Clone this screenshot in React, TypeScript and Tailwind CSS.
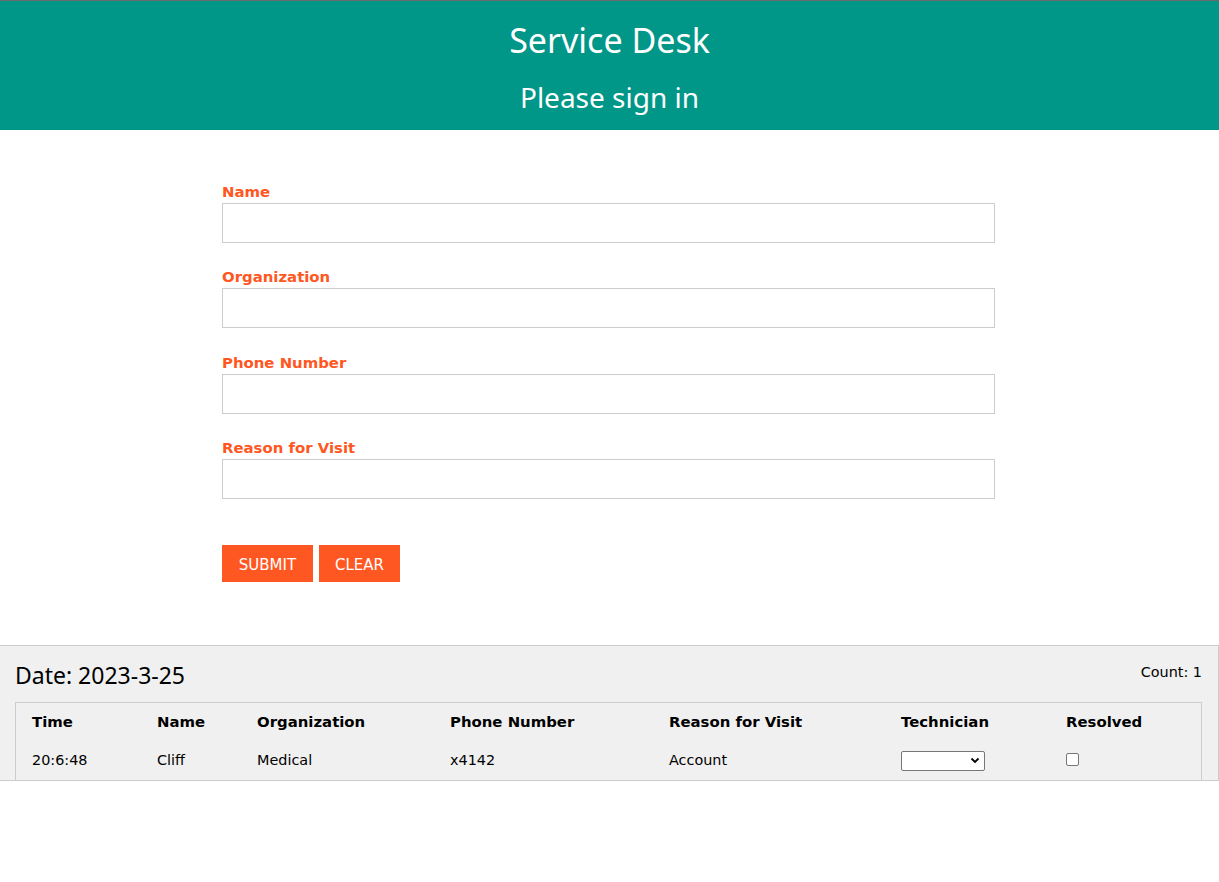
import React from "react";

const verdana = { fontFamily: '"DejaVu Sans", Verdana, sans-serif' };
const segoe = { fontFamily: '"Noto Sans", "Open Sans", sans-serif' };

function Field({ label, mt }: { label: string; mt: string }) {
  return (
    <div className={mt}>
      <div className="pt-[1px] text-[14.9px] leading-[17px] font-bold text-[#ff5722]" style={verdana}>
        {label}
      </div>
      <div className="mt-[2px] h-[40px] w-[773px] border border-[#cccccc] bg-white" />
    </div>
  );
}

const cols = "grid grid-cols-[125px_100px_193px_219px_232px_165px_1fr]";

export default function App() {
  return (
    <div className="min-h-[882px] w-full bg-white">
      <header className="flex h-[130px] flex-col items-center border-t border-[#6b6b6b] bg-[#009688] text-white" style={segoe}>
        <div className="mt-[15px] text-[34px] leading-[48px]">Service Desk</div>
        <div className="mt-[14px] text-[28px] leading-[38px]">Please sign in</div>
      </header>

      <div className="ml-[222px] pt-[53px]">
        <Field label="Name" mt="" />
        <Field label="Organization" mt="mt-[25px]" />
        <Field label="Phone Number" mt="mt-[26px]" />
        <Field label="Reason for Visit" mt="mt-[25px]" />
        <div className="mt-[46px] flex gap-[6px]" style={verdana}>
          <div className="flex h-[37px] w-[91px] items-center justify-center bg-[#ff5722] pt-[3px] text-[15px] text-white" style={verdana}>SUBMIT</div>
          <div className="flex h-[37px] w-[81px] items-center justify-center bg-[#ff5722] pt-[3px] text-[15px] text-white" style={verdana}>CLEAR</div>
        </div>
      </div>

      <section className="mt-[63px] border-t border-r border-b border-[#cccccc] bg-[#f0f0f0] pl-[15px] pr-[16px]">
        <div className="flex h-[56px] items-start justify-between">
          <div className="mt-[14px] text-[23px] leading-[30px] text-black" style={segoe}>Date: 2023-3-25</div>
          <div className="mt-[18px] text-[14.4px] leading-[17px] text-black" style={verdana}>Count: 1</div>
        </div>
        <div className="border-l border-r border-t border-[#cccccc] pl-[16px] text-[14.4px] text-black" style={verdana}>
          <div className={`${cols} h-[38px] items-center pt-[1px] text-[14.9px] font-bold`}>
            <div>Time</div>
            <div>Name</div>
            <div>Organization</div>
            <div>Phone Number</div>
            <div>Reason for Visit</div>
            <div>Technician</div>
            <div>Resolved</div>
          </div>
          <div className={`${cols} h-[39px] items-center`}>
            <div>20:6:48</div>
            <div>Cliff</div>
            <div>Medical</div>
            <div>x4142</div>
            <div>Account</div>
            <div>
              <div className="flex h-[20px] w-[84px] items-center justify-end rounded-[2px] border border-[#767676] bg-white pr-[4px]">
                <svg width="10" height="7" viewBox="0 0 10 7">
                  <path d="M1.5 1.5 L5 5 L8.5 1.5" fill="none" stroke="#000" strokeWidth="1.8" />
                </svg>
              </div>
            </div>
            <div>
              <div className="-mt-[2px] h-[13px] w-[13px] rounded-[2px] border border-[#767676] bg-white" />
            </div>
          </div>
        </div>
      </section>
    </div>
  );
}
